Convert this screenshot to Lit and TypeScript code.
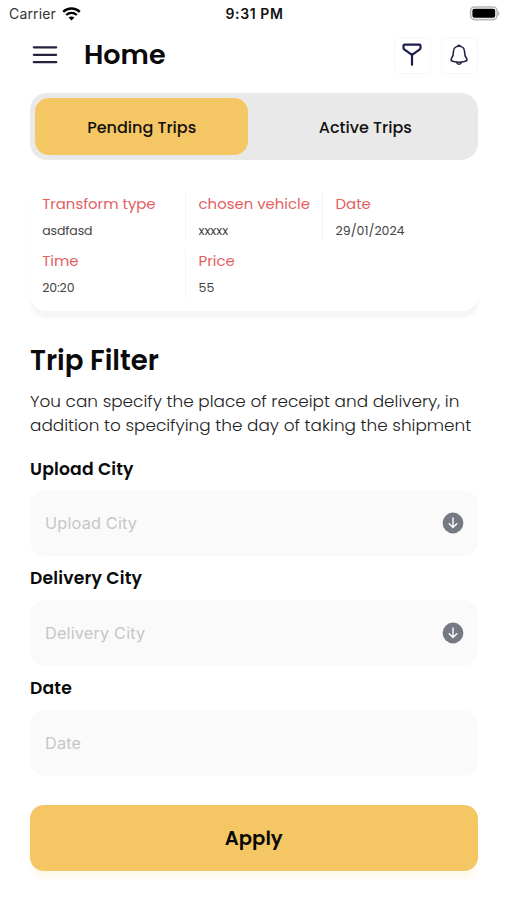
import { LitElement, html, css, nothing } from "lit";
import { customElement, property } from "lit/decorators.js";

interface Detail {
  label: string;
  value: string;
}

const detailRows: Detail[][] = [
  [
    { label: "Transform type", value: "asdfasd" },
    { label: "chosen vehicle", value: "xxxxx" },
    { label: "Date", value: "29/01/2024" },
  ],
  [
    { label: "Time", value: "20:20" },
    { label: "Price", value: "55" },
  ],
];

@customElement("status-bar")
class StatusBar extends LitElement {
  static styles = css`
    :host {
      display: grid;
      grid-template-columns: 1fr auto 1fr;
      align-items: center;
      height: 27px;
      padding: 0 7px 0 9px;
      font-family: Inter, "Liberation Sans", sans-serif;
      font-size: 14px;
      color: #111;
    }
    .left { display: flex; align-items: center; gap: 6px; color: #333; letter-spacing: 0.15px; }
    .time { font-weight: 600; letter-spacing: 0.6px; }
    .battery { justify-self: end; display: block; }
    svg { display: block; }
  `;
  render() {
    return html`
      <div class="left">
        <span>Carrier</span>
        <svg width="19" height="14" viewBox="0 0 19 14" fill="none" stroke="#000">
          <path d="M1.2 4.8C5.8.4 13.2.4 17.8 4.8" stroke-width="2.4" />
          <path d="M4.2 8C7.2 5.2 11.8 5.2 14.8 8" stroke-width="2.3" />
          <path d="M9.5 13.6 6.6 10.6C8.2 9.1 10.8 9.1 12.4 10.6Z" fill="#000" stroke="none" />
        </svg>
      </div>
      <span class="time">9:31 PM</span>
      <svg class="battery" width="31" height="15" viewBox="0 0 31 15">
        <rect x="1.6" y="1" width="26.4" height="12.6" rx="4" fill="#fff" stroke="#b8b8b8" stroke-width="1.6" />
        <rect x="3.4" y="2.8" width="22.8" height="9" rx="2" fill="#000" />
        <path d="M29.2 5.2c1.6.6 1.6 4 0 4.6z" fill="#aaa" />
      </svg>
    `;
  }
}

@customElement("top-header")
class TopHeader extends LitElement {
  static styles = css`
    :host {
      display: flex;
      align-items: center;
      height: 56px;
      padding: 0 29.5px 0 32px;
    }
    svg { display: block; }
    .title {
      flex: 1;
      margin: 0 0 0 26px;
      font-size: 27px;
      font-weight: 600;
      line-height: 36px;
    }
    .actions { display: flex; gap: 10px; }
    .action {
      display: grid;
      place-items: center;
      box-sizing: border-box;
      width: 37px;
      height: 37px;
      border: 1.5px solid #f7f7f9;
      border-radius: 7px;
    }
  `;
  render() {
    return html`
      <svg width="26" height="20" viewBox="0 0 26 20" stroke="#2b2040" stroke-width="2.2" stroke-linecap="round">
        <path d="M1.8 2.3H24.2M1.8 9.8H24.2M1.8 17.2H24.2" />
      </svg>
      <h1 class="title">Home</h1>
      <div class="actions">
        <div class="action">
          <svg width="22" height="24" viewBox="0 0 22 24" fill="none" stroke="#1b1d4d" stroke-width="2.2" stroke-linejoin="round" stroke-linecap="round">
            <path d="M3.8 1.7H18.2Q19.5 1.7 19.5 3V4.9Q19.5 5.8 18.8 6.3L11 11.8 3.2 6.3Q2.5 5.8 2.5 4.9V3Q2.5 1.7 3.8 1.7Z" />
            <path d="M11 11.8V21.8" />
          </svg>
        </div>
        <div class="action">
          <svg width="20" height="22" viewBox="0 0 20 22" fill="none" stroke="#2a2446" stroke-width="1.6" stroke-linejoin="round" stroke-linecap="round">
            <path d="M10 2.2C6.5 2.2 4.4 4.8 4.4 8C4.4 12 3.6 12.9 2.6 14.2C1.5 15.8 2 16.8 3.7 17.3C7.5 18.5 12.5 18.5 16.3 17.3C18 16.8 18.5 15.8 17.4 14.2C16.4 12.9 15.6 12 15.6 8C15.6 4.8 13.5 2.2 10 2.2Z" />
            <path d="M8.8 2Q10 .8 11.2 2M7.6 18.4Q8 20.2 10 20.2T12.4 18.4" />
          </svg>
        </div>
      </div>
    `;
  }
}

@customElement("trip-tabs")
class TripTabs extends LitElement {
  static styles = css`
    :host {
      display: grid;
      grid-template-columns: 213px 1fr;
      box-sizing: border-box;
      height: 67px;
      margin: 10.4px 29.5px 0 30.2px;
      padding: 5px;
      border-radius: 17px;
      background: #e9e9e9;
    }
    .tab {
      display: grid;
      place-items: center;
      padding-top: 1px;
      border-radius: 14px;
      font-size: 16px;
      font-weight: 500;
      color: #111;
    }
    .tab:last-child { padding-left: 10px; }
    .active { background: #f5c664; }
  `;
  render() {
    return html`
      <div class="tab active">Pending Trips</div>
      <div class="tab">Active Trips</div>
    `;
  }
}

@customElement("trip-card")
class TripCard extends LitElement {
  static styles = css`
    :host {
      display: block;
      box-sizing: border-box;
      height: 119px;
      margin: 31.6px 28.5px 0 30px;
      border-radius: 0 0 17px 17px;
      background: #fff;
      box-shadow: 0 8px 3px -1px #f6f6f6, 0 5px 8px rgba(0, 0, 0, 0.014);
    }
    .row {
      display: grid;
      grid-template-columns: 156.4px 137px 1fr;
      height: 49px;
      margin-bottom: 8px;
    }
    .cell {
      box-sizing: border-box;
      padding-left: 12.2px;
      border-right: 1px solid #f4f4f4;
    }
    .cell:last-child { border-right: none; }
    .label {
      font-size: 14.9px;
      line-height: 24px;
      white-space: nowrap;
      color: #e2605f;
    }
    .value {
      padding-top: 6px;
      font-size: 12.5px;
      line-height: 18px;
      letter-spacing: -0.1px;
      color: #444;
    }
    .cell:last-child .value { letter-spacing: 0; }
  `;
  render() {
    return detailRows.map(
      (row) => html`
        <div class="row">
          ${row.map(
            (d) => html`
              <div class="cell">
                <div class="label">${d.label}</div>
                <div class="value">${d.value}</div>
              </div>
            `
          )}
        </div>
      `
    );
  }
}

@customElement("filter-field")
class FilterField extends LitElement {
  @property() label = "";
  @property({ type: Boolean }) picker = false;

  static styles = css`
    :host { display: block; height: 109.7px; }
    .label {
      font-size: 17.2px;
      font-weight: 600;
      line-height: 24px;
      letter-spacing: 0.17px;
    }
    .box {
      display: flex;
      align-items: center;
      justify-content: space-between;
      box-sizing: border-box;
      height: 66px;
      margin-top: 9.5px;
      padding: 0 14px 0 15px;
      border-radius: 15px;
      background: #fafafa;
      font-family: Inter, "Liberation Sans", sans-serif;
      font-size: 16.3px;
      letter-spacing: 0.17px;
      color: #c6c6c8;
    }
    svg { display: block; }
  `;
  render() {
    return html`
      <div class="label">${this.label}</div>
      <div class="box">
        <span>${this.label}</span>
        ${this.picker
          ? html`
              <svg width="22" height="22" viewBox="0 0 22 22" fill="none">
                <circle cx="11" cy="11" r="10.4" fill="#757983" />
                <path d="M11 6V15.4M7.2 11.8 11 15.6 14.8 11.8" stroke="#fff" stroke-width="1.4" stroke-linecap="round" stroke-linejoin="round" />
              </svg>
            `
          : nothing}
      </div>
    `;
  }
}

@customElement("app-root")
class AppRoot extends LitElement {
  static styles = css`
    :host {
      display: block;
      box-sizing: border-box;
      height: 900px;
      overflow: hidden;
      background: #fff;
      color: #0a0a0a;
      font-family: Poppins, Inter, "Liberation Sans", sans-serif;
    }
    .filter { padding: 30.6px 29.5px 0 30px; }
    .heading {
      margin: 0;
      font-size: 27.6px;
      font-weight: 600;
      line-height: 38px;
    }
    .intro {
      margin: 9px 0 20.2px;
      font-size: 16.86px;
      font-weight: 300;
      line-height: 24px;
      white-space: nowrap;
      color: #222;
    }
    .line { display: block; }
    .apply {
      display: grid;
      place-items: center;
      height: 66px;
      margin-top: 18.8px;
      border-radius: 14px;
      background: #f5c664;
      box-shadow: 0 9px 7px -2px #fef8ea;
      font-size: 19.6px;
      font-weight: 600;
    }
  `;
  render() {
    return html`
      <status-bar></status-bar>
      <top-header></top-header>
      <trip-tabs></trip-tabs>
      <trip-card></trip-card>
      <section class="filter">
        <h2 class="heading">Trip Filter</h2>
        <p class="intro">
          <span class="line">You can specify the place of receipt and delivery, in</span>
          <span class="line">addition to specifying the day of taking the shipment</span>
        </p>
        <filter-field label="Upload City" picker></filter-field>
        <filter-field label="Delivery City" picker></filter-field>
        <filter-field label="Date"></filter-field>
        <div class="apply">Apply</div>
      </section>
    `;
  }
}
